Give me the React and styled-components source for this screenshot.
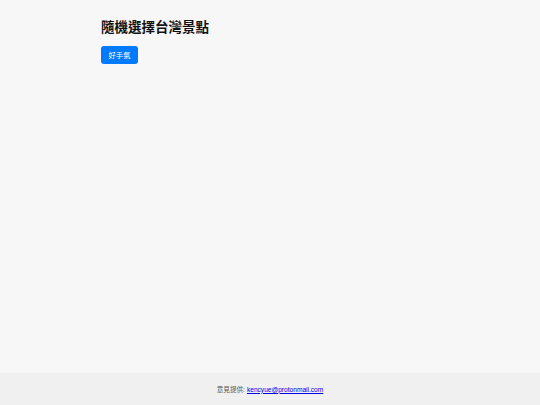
import { styled, createGlobalStyle } from "styled-components";

const GlobalStyle = createGlobalStyle`
  html, body {
    margin: 0;
    padding: 0;
    height: 100%;
    background: #f7f7f7;
  }
  #root {
    height: 100%;
  }
`;

const Page = styled.div`
  display: flex;
  flex-direction: column;
  min-height: 100vh;
  font-family: "Liberation Sans", "Noto Sans CJK TC", sans-serif;
`;

const Main = styled.main`
  flex: 1;
  padding: 19px 101px 0;
`;

const Title = styled.h1`
  margin: 0 0 9px;
  font-size: 13.5px;
  font-weight: bold;
  line-height: 18px;
  color: #111;
`;

const LuckyButton = styled.button`
  display: flex;
  align-items: center;
  justify-content: center;
  width: 37px;
  height: 18px;
  padding: 0;
  border: none;
  border-radius: 3px;
  background: #007bff;
  color: #ffffff;
  font-family: inherit;
  font-size: 7.3px;
  cursor: pointer;
`;

const Footer = styled.footer`
  display: flex;
  justify-content: center;
  align-items: center;
  height: 32px;
  background: #f0f0f0;
  font-size: 6.6px;
  color: #555;
`;

const Link = styled.a`
  color: #0000ee;
  text-decoration: underline;
  margin-left: 2px;
`;

const App = () => {
  return (
    <Page>
      <GlobalStyle />
      <Main>
        <Title>隨機選擇台灣景點</Title>
        <LuckyButton>好手氣</LuckyButton>
      </Main>
      <Footer>
        意見提供:<Link href="mailto:kencyue@protonmail.com">kencyue@protonmail.com</Link>
      </Footer>
    </Page>
  );
};

export default App;
